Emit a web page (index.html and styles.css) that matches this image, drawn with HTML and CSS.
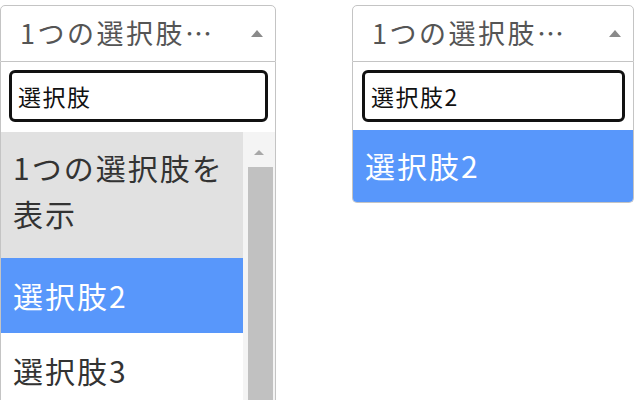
FILE: index.html
```html
<!DOCTYPE html>
<html lang="ja">
<head>
<meta charset="utf-8">
<link rel="stylesheet" href="styles.css">
</head>
<body>
<div class="page">
  <div class="select left">
    <div class="selection">
      <span class="rendered">1つの選択肢…</span>
      <span class="arrow"></span>
    </div>
    <div class="dropdown">
      <div class="search"><div class="field">選択肢</div></div>
      <div class="results">
        <ul class="options">
          <li class="option selected">1つの選択肢を<br>表示</li>
          <li class="option highlighted">選択肢2</li>
          <li class="option">選択肢3</li>
        </ul>
        <div class="scrollbar">
          <span class="up"></span>
          <div class="thumb"></div>
        </div>
      </div>
    </div>
  </div>
  <div class="select right">
    <div class="selection">
      <span class="rendered">1つの選択肢…</span>
      <span class="arrow"></span>
    </div>
    <div class="dropdown rounded">
      <div class="search"><div class="field">選択肢2</div></div>
      <ul class="options">
        <li class="option highlighted single">選択肢2</li>
      </ul>
    </div>
  </div>
</div>
</body>
</html>
```
FILE: styles.css
```css
* { box-sizing: border-box; }
html, body { margin: 0; padding: 0; background: #fff; }
body {
  width: 640px; height: 400px; overflow: hidden;
  font-family: "Noto Sans CJK JP", "Noto Sans", sans-serif;
  color: #333;
}
.page {
  display: flex;
  gap: 76px;
  padding-top: 5px;
}
.select { display: flex; flex-direction: column; }
.left { width: 276px; }
.right { width: 282px; }

.selection {
  height: 57px;
  border: 1px solid #c4c4c4;
  border-radius: 5px 5px 0 0;
  display: flex;
  align-items: center;
  padding-left: 19px;
  padding-right: 12px;
}
.rendered {
  flex: 1;
  font-size: 27px;
  letter-spacing: 2.5px;
  color: #555;
  line-height: 1;
  padding-bottom: 2px;
  white-space: nowrap;
}
.arrow {
  flex: none;
  width: 0; height: 0;
  border-left: 6px solid transparent;
  border-right: 6px solid transparent;
  border-bottom: 7px solid #8a8a8a;
}

.dropdown {
  border-left: 1px solid #c4c4c4;
  border-right: 1px solid #c4c4c4;
}
.dropdown.rounded {
  border-bottom: 1px solid #c4c4c4;
  border-radius: 0 0 5px 5px;
  overflow: hidden;
}
.search { padding: 8px 7px 10px 8px; }
.right .search { padding: 8px 8px 8px 9px; }
.field {
  height: 52px;
  border: 3px solid #111;
  border-radius: 6px;
  font-size: 23px;
  letter-spacing: 1.5px;
  color: #111;
  line-height: 46px;
  padding-left: 6px;
}

.results { display: flex; height: 268px; overflow: hidden; }
.options { list-style: none; margin: 0; padding: 0; flex: 1; }
.option {
  font-size: 30px;
  letter-spacing: 2px;
  line-height: 44px;
  padding: 15px 12px 16px 12px;
  color: #333;
  white-space: nowrap;
}
.option.selected {
  background: #e1e1e1;
  line-height: 46px;
  padding-top: 12px;
  padding-bottom: 22px;
}
.option.highlighted { background: #5897fb; color: #fff; }
.option.single { padding-top: 13px; padding-bottom: 15px; }

.scrollbar {
  flex: none;
  width: 32px;
  background: #f4f4f4;
  display: flex;
  flex-direction: column;
  align-items: center;
  padding-top: 18px;
}
.up {
  width: 0; height: 0;
  border-left: 5px solid transparent;
  border-right: 5px solid transparent;
  border-bottom: 5px solid #a8a8a8;
}
.thumb {
  margin-top: 12px;
  margin-left: 3px;
  width: 25px;
  flex: 1;
  background: #c1c1c1;
}
```
